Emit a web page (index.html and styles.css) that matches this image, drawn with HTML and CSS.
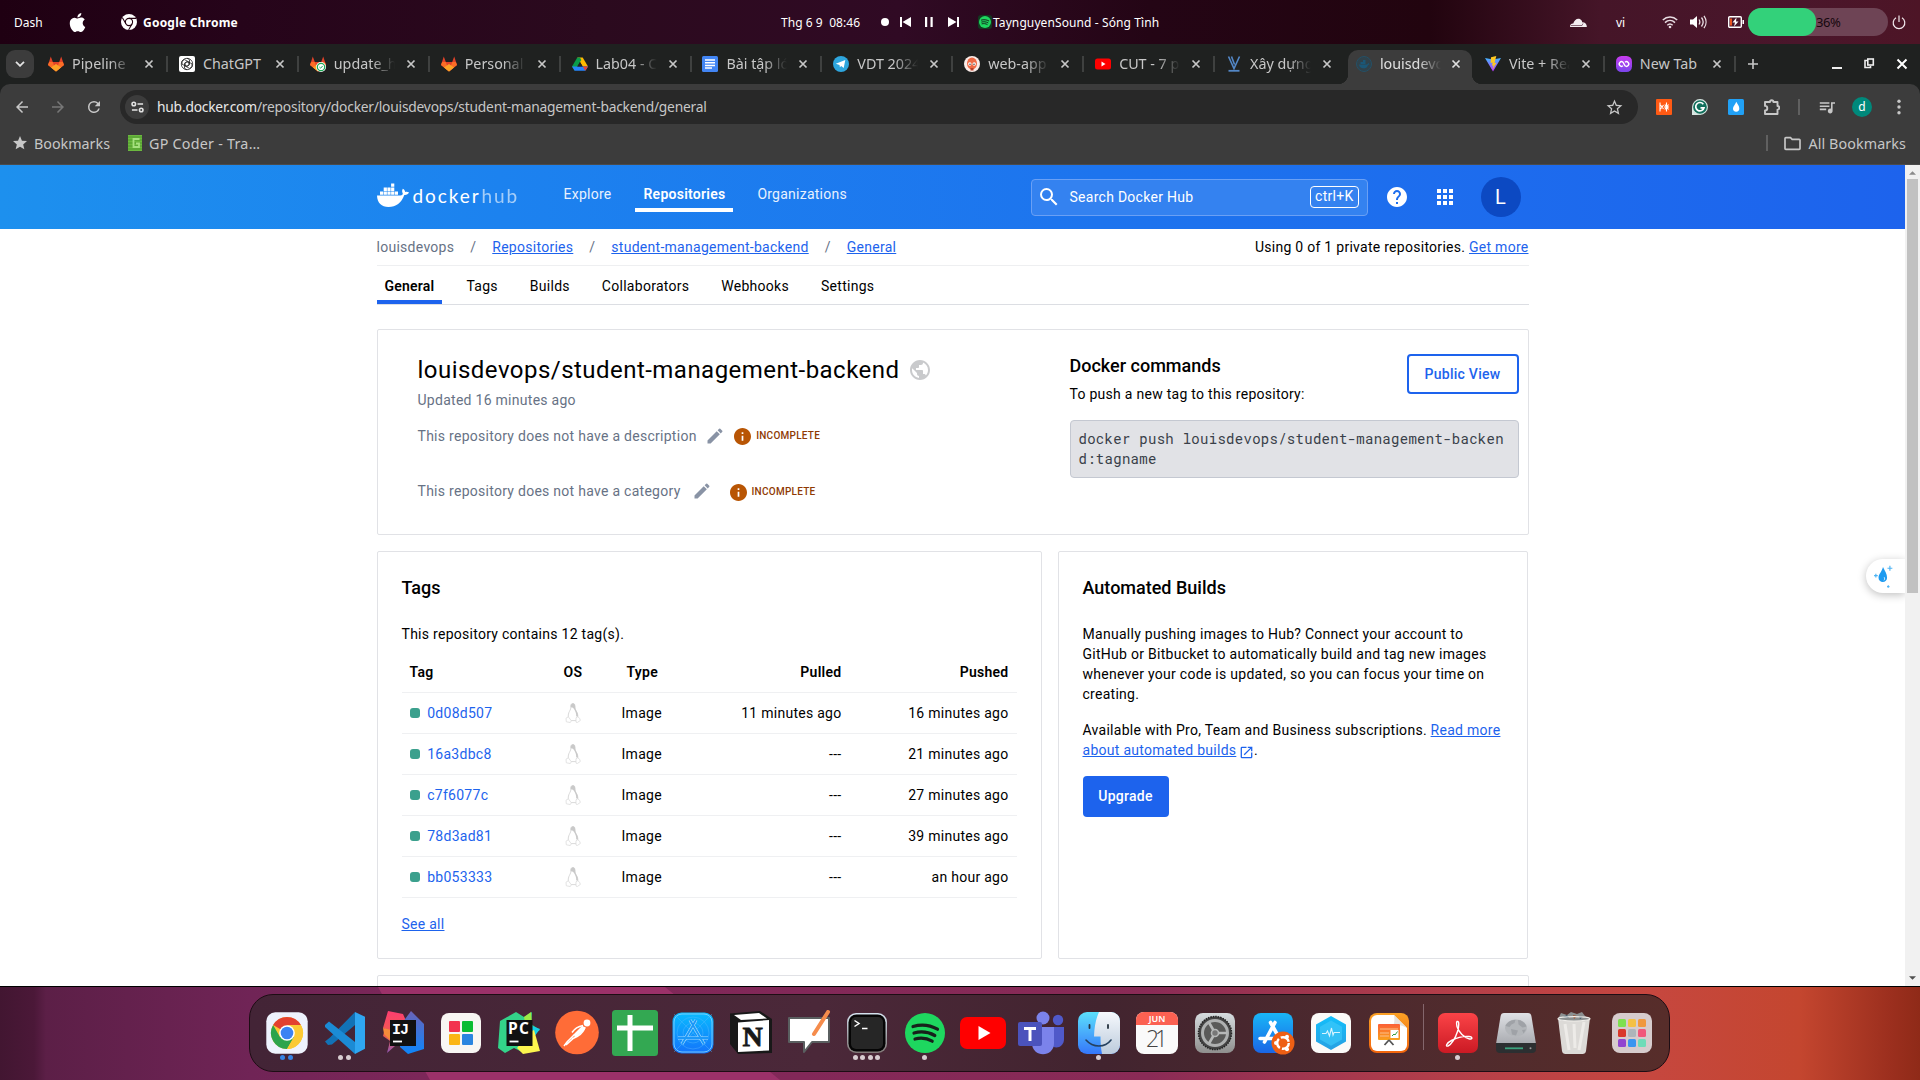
FILE: index.html
```html
<!DOCTYPE html>
<html lang="en">
<head>
<meta charset="utf-8">
<title>louisdevops/student-management-backend general | Docker Hub</title>
<link rel="stylesheet" href="styles.css">
</head>
<body>
<svg class="defs" aria-hidden="true">
  <defs>
    <linearGradient id="gBlue" x1="0" y1="0" x2="0" y2="1"><stop offset="0" stop-color="#19b6f7"/><stop offset="1" stop-color="#1a66e6"/></linearGradient>
    <linearGradient id="gRed" x1="0" y1="0" x2="0" y2="1"><stop offset="0" stop-color="#fb4347"/><stop offset="1" stop-color="#cb1a24"/></linearGradient>
    <linearGradient id="gGrey" x1="0" y1="0" x2="0" y2="1"><stop offset="0" stop-color="#d6dcdf"/><stop offset="1" stop-color="#8f8f8e"/></linearGradient>
    <linearGradient id="gFinder" x1="0" y1="0" x2="0" y2="1"><stop offset="0" stop-color="#5ce0fb"/><stop offset="1" stop-color="#3577fb"/></linearGradient>
    <linearGradient id="gFace" x1="0" y1="0" x2="0" y2="1"><stop offset="0" stop-color="#f6f9fd"/><stop offset="1" stop-color="#bccbdc"/></linearGradient>
    <linearGradient id="gVite" x1="0" y1="0" x2="0" y2="1"><stop offset="0" stop-color="#41b6ff"/><stop offset="1" stop-color="#bd34fe"/></linearGradient>
    <linearGradient id="gPurple" x1="0" y1="0" x2="0" y2="1"><stop offset="0" stop-color="#c93cf0"/><stop offset="1" stop-color="#7a45ec"/></linearGradient>
    <linearGradient id="gOrange" x1="0" y1="0" x2="0" y2="1"><stop offset="0" stop-color="#fba125"/><stop offset="1" stop-color="#f2650c"/></linearGradient>
    <linearGradient id="gSheet" x1="0" y1="0" x2="0" y2="1"><stop offset="0" stop-color="#fb6036"/><stop offset="1" stop-color="#f9a11d"/></linearGradient>
    <linearGradient id="gIjL" x1="0" y1="0" x2="0" y2="1"><stop offset="0" stop-color="#fe3d70"/><stop offset=".6" stop-color="#ee5f4c"/><stop offset="1" stop-color="#8f56b5"/></linearGradient>
    <linearGradient id="gIjR" x1="0" y1="0" x2="0" y2="1"><stop offset="0" stop-color="#6a63b8"/><stop offset="1" stop-color="#0d86fb"/></linearGradient>
    <linearGradient id="gDisk" x1="0" y1="0" x2="0" y2="1"><stop offset="0" stop-color="#dfe1e5"/><stop offset="1" stop-color="#a9abb0"/></linearGradient>
    <linearGradient id="gHex" x1="0" y1="0" x2="0" y2="1"><stop offset="0" stop-color="#13bffb"/><stop offset="1" stop-color="#27a0e2"/></linearGradient>
    <linearGradient id="gStore" x1="0" y1="0" x2="0" y2="1"><stop offset="0" stop-color="#09bcfe"/><stop offset="1" stop-color="#1373fb"/></linearGradient>
    <linearGradient id="gTerm" x1="0" y1="0" x2="0" y2="1"><stop offset="0" stop-color="#d5e2ef"/><stop offset="1" stop-color="#7f7775"/></linearGradient>
  </defs>
  <symbol id="close" viewBox="0 0 10 10"><path d="M1.500 1.500l7 7M8.500 1.500l-7 7" stroke="currentColor" stroke-width="1.700" fill="none"/></symbol>
  <symbol id="gitlab" viewBox="0 0 16 16"><path d="M2.800.5l2 5.500h6.400l2-5.500L16 9l-8 6.500L0 9z" fill="#e24329"/><path d="M0 9l1.100-3h3.700L8 15.500z M16 9l-1.100-3h-3.700L8 15.500z" fill="#fc6d26"/><path d="M3 11.400l5-3.500 5 3.500-5 4.100z" fill="#fca326"/></symbol>
  <symbol id="tux" viewBox="0 0 16 20"><path d="M8 .5C5.900.5 5.700 2.300 5.800 4.500c.1 1.900-1.300 3.300-2 5.300-.5 1.500-.8 3-.5 4.200l1.500 3.600h6l2-3.600c.2-1.700-.3-3.600-1.200-5.200-.8-1.500-1.600-2.500-1.600-4.300 0-2.400-.3-4-2-4z" fill="#fff" stroke="#cfcfcf" stroke-width=".8"/><path d="M5.800 4.200C5.600 1.500 6.300.4 8 .4s2.200 1.400 2.200 3.700c0 1.800.8 3 1.700 4.700.9 1.700 1.300 3.600 1 5.200l-1.700-.8c.2-2.400-.6-4.600-2-7L8 4.800z" fill="#c9c9c9"/><path d="M3.400 13.800L1 15.200l.3 3.600 4 .7 1-1.700zM12.700 13.800l-1.700 1v4.300l1.300.4 3-2-.6-2.200z" fill="#fff" stroke="#dcdcdc" stroke-width=".8"/></symbol>
  <symbol id="edit" viewBox="0 0 24 24"><path d="M3 17.250V21h3.750L17.810 9.940l-3.750-3.750L3 17.250zM20.710 7.040a1 1 0 0 0 0-1.410l-2.340-2.340a1 1 0 0 0-1.410 0l-1.830 1.830 3.750 3.750 1.830-1.830z" fill="#8993a5"/></symbol>
  <symbol id="info" viewBox="2 2 20 20"><path d="M12 2C6.480 2 2 6.480 2 12s4.480 10 10 10 10-4.480 10-10S17.520 2 12 2zm1 15h-2v-6h2v6zm0-8h-2V7h2v2z" fill="#b85504"/></symbol>
  <symbol id="arrow" viewBox="0 0 24 24"><path d="M20 11H7.830l5.590-5.590L12 4l-8 8 8 8 1.410-1.410L7.830 13H20v-2z" fill="currentColor"/></symbol>
  <symbol id="spotify" viewBox="0 0 40 40"><circle cx="20" cy="20" r="20" fill="#1ed75f"/><path d="M8 13.500c8-2.300 17-1.500 24.500 2.700M9 20c7-1.900 14.500-1 20.800 2.500M10 26c6-1.500 12-.8 17.200 2.200" stroke="#17211b" fill="none" stroke-linecap="round" stroke-width="3.200"/></symbol>
</svg>

<header class="topbar">
  <span class="tb-dash">Dash</span>
  <svg class="tb-apple" viewBox="0 0 24 24"><path fill="#fff" d="M12.152 6.896c-.948 0-2.415-1.078-3.960-1.040-2.040.027-3.910 1.183-4.961 3.014-2.117 3.675-.546 9.103 1.519 12.090 1.013 1.454 2.208 3.090 3.792 3.039 1.520-.065 2.090-.987 3.935-.987 1.831 0 2.350.987 3.960.948 1.637-.026 2.676-1.480 3.676-2.948 1.156-1.688 1.636-3.325 1.662-3.415-.039-.013-3.182-1.221-3.220-4.857-.026-3.040 2.480-4.494 2.597-4.559-1.429-2.090-3.623-2.324-4.390-2.376-2-.156-3.675 1.090-4.610 1.090zM15.530 3.830c.843-1.012 1.400-2.427 1.245-3.830-1.207.052-2.662.805-3.532 1.818-.780.896-1.454 2.338-1.273 3.714 1.338.104 2.715-.688 3.559-1.701"/></svg>
  <svg class="tb-chrome" viewBox="0 0 16 16"><circle cx="8" cy="8" r="8" fill="#fff"/><g fill="none" stroke="#22000f" stroke-width="1.100"><circle cx="8" cy="8" r="3.600"/><path d="M8 4.400h7M4.900 9.800L1.400 3.700M11.100 9.800L7.600 15.900"/></g><circle cx="8" cy="8" r="2.100" fill="#fff"/></svg>
  <b class="tb-app">Google Chrome</b>
  <span class="tb-clock">Thg 6 9&nbsp; 08:46</span>
  <span class="tb-dot"></span>
  <svg class="tb-media" viewBox="0 0 60 12"><path fill="#fff" d="M0 1h2v10H0zM11 1v10L2.500 6zM25 1h2.200v10H25zM30.500 1h2.200v10h-2.200zM48 1v10l8.500-5zM57 1h2v10h-2z"/></svg>
  <span class="tb-spot"><svg viewBox="0 0 40 40"><use href="#spotify"/></svg></span>
  <span class="tb-song">TaynguyenSound - Sóng Tình</span>
  <svg class="tb-cloud" viewBox="0 0 17 9"><path d="M0 9c0-2.500 1.500-3.600 3.300-3.400C4 1.500 8.500-1 11.200 2c.7.700 1 1.500 1 2.300C15.400 4.300 17 6.500 16.800 9z" fill="#f3edf0"/><path d="M1 7.500h11l1-2" stroke="#5a3346" stroke-width=".7" fill="none"/></svg>
  <span class="tb-lang">vi</span>
  <svg class="tb-wifi" viewBox="0 0 16 14"><g fill="none" stroke="#e9dde3" stroke-width="1.500"><path d="M.8 5C5 1 11 1 15.200 5M3 7.600c3-2.900 7-2.900 10 0M5.300 10.200c1.700-1.600 3.700-1.600 5.400 0"/></g><circle cx="8" cy="12" r="1.300" fill="#e9dde3"/></svg>
  <svg class="tb-vol" viewBox="0 0 17 14"><path d="M0 4.500h3L7 1v12L3 9.500H0z" fill="#fff"/><path d="M9 4.500c1 1.500 1 3.500 0 5M11.500 2.500c2 2.700 2 6.300 0 9M14 .8c2.700 3.700 2.700 8.700 0 12.400" fill="none" stroke="#eadfe4" stroke-width="1.300"/></svg>
  <svg class="tb-batt" viewBox="0 0 16 12"><rect x=".7" y=".7" width="12.600" height="10.600" rx="1" fill="none" stroke="#fff" stroke-width="1.400"/><path d="M2 2.500h2v7H2z" fill="#e95420"/><path d="M8.500 1.500L4.500 6.500H7L6 10.500l4.500-5H8z" fill="#fff"/><path d="M14.500 4h1.500v4h-1.500z" fill="#fff"/></svg>
  <span class="tb-pill"><i></i><em>36%</em></span>
  <svg class="tb-power" viewBox="0 0 14 14"><path d="M4 2.300a5.800 5.800 0 1 0 6 0M7 0v6.500" fill="none" stroke="#f2e9ed" stroke-width="1.200"/></svg>
</header>

<div class="browser">
<div class="tabstrip">
  <span class="tabsearch"><svg viewBox="0 0 10 6"><path d="M1 .8l4 4 4-4" fill="none" stroke="#e3e3e3" stroke-width="1.800"/></svg></span>
  <div class="tabs">
    <div class="tab"><svg class="fav" viewBox="0 0 16 16"><use href="#gitlab"/></svg><span>Pipeline</span><svg class="x"><use href="#close"/></svg></div>
    <div class="tab"><svg class="fav" viewBox="0 0 16 16"><rect width="16" height="16" rx="2" fill="#fff"/><g fill="none" stroke="#222" stroke-width=".8"><path d="M8 2.200l2.500 1.500v5L8 10.200 5.500 8.700M8 13.800l-2.500-1.500v-5L8 5.800l2.500 1.500M3 5.100l2.500-1.500 4.400 2.500v3M13 10.900l-2.500 1.500L6.100 9.900v-3M3 5.100v3l4.400 2.500 2.600-1.500M13 10.900v-3L8.600 5.400 6.100 6.900"/></g><circle cx="8" cy="8" r="5.700" fill="none" stroke="#222" stroke-width=".8"/></svg><span>ChatGPT</span><svg class="x"><use href="#close"/></svg></div>
    <div class="tab"><svg class="fav" viewBox="0 0 16 16"><use href="#gitlab"/><circle cx="11" cy="11" r="5" fill="#fff"/><circle cx="11" cy="11" r="3.700" fill="#fff" stroke="#1aaa55" stroke-width="1.200"/><path d="M9.400 11l1.200 1.200 2-2.200" stroke="#1aaa55" fill="none"/></svg><span>update_h</span><svg class="x"><use href="#close"/></svg></div>
    <div class="tab"><svg class="fav" viewBox="0 0 16 16"><use href="#gitlab"/></svg><span>Personal</span><svg class="x"><use href="#close"/></svg></div>
    <div class="tab"><svg class="fav" viewBox="0 0 16 16"><path d="M5.300 1.500h5.400L16 10.500h-5.300z" fill="#ffba00"/><path d="M0 10.500L5.300 1.500h2.700L9.300 4 2.700 14.800z" fill="#0a9c4b"/><path d="M0 10.500h16l-2.700 4.300H2.700z" fill="#2684fc"/><path d="M10.700 10.500H16l-2.700 4.300z" fill="#ea4335"/><path d="M8 6l2.700 4.500H5.300z" fill="#202220"/></svg><span>Lab04 - C</span><svg class="x"><use href="#close"/></svg></div>
    <div class="tab"><svg class="fav" viewBox="0 0 16 16"><rect width="16" height="16" rx="1.500" fill="#4285f4"/><path d="M3 4h10M3 6.700h10M3 9.400h10M3 12.100h7" stroke="#fff" stroke-width="1.500"/></svg><span>Bài tập lớ</span><svg class="x"><use href="#close"/></svg></div>
    <div class="tab"><svg class="fav" viewBox="0 0 16 16"><circle cx="8" cy="8" r="8" fill="#2ea6de"/><path d="M2.800 7.800l9.500-3.900-1.600 8-2.500-1.800-1.300 1.200-.4-2.300z" fill="#fff"/></svg><span>VDT 2024</span><svg class="x"><use href="#close"/></svg></div>
    <div class="tab"><svg class="fav" viewBox="0 0 16 16"><circle cx="8" cy="8" r="8" fill="#fbece8"/><ellipse cx="8" cy="7.500" rx="5" ry="6" fill="#ef6a45"/><circle cx="5.800" cy="8" r="1.700" fill="#fff"/><circle cx="10.200" cy="8" r="1.700" fill="#fff"/><circle cx="6" cy="8.200" r=".7" fill="#222"/><circle cx="10" cy="8.200" r=".7" fill="#222"/><path d="M6.500 12h3v2.500h-3z" fill="#b5402a"/></svg><span>web-app</span><svg class="x"><use href="#close"/></svg></div>
    <div class="tab"><svg class="fav" viewBox="0 0 16 16"><rect y="2.500" width="16" height="11" rx="2.500" fill="#f00"/><path d="M6.500 5.600v4.800L10.500 8z" fill="#fff"/></svg><span>CUT - 7 p</span><svg class="x"><use href="#close"/></svg></div>
    <div class="tab"><svg class="fav" viewBox="0 0 16 16"><path d="M2.500.5l5.500 12 5.500-12M5.500.5l3 8" stroke="#5387c6" stroke-width="1.600" fill="none"/><path d="M2.500 14.800h11" stroke="#5387c6" stroke-width="1.800"/></svg><span>Xây dựng</span><svg class="x"><use href="#close"/></svg></div>
    <div class="tab active"><svg class="fav" viewBox="0 0 16 16"><circle cx="8" cy="8" r="7.500" fill="#30424b" stroke="#255066"/><path d="M3 8.500h8l1.500-1.500 1 1.200-1.500.8c-1 3-3 3.500-5 3.300C5 12.200 3.300 11 3 8.500zM4.500 6h5v2h-5zM7 4h2.500v2H7z" fill="#1b5777"/></svg><span>louisdevops</span><svg class="x"><use href="#close"/></svg></div>
    <div class="tab"><svg class="fav" viewBox="0 0 16 16"><path d="M0 2l8 13.500L16 2 8 3.500z" fill="url(#gVite)"/><path d="M11.300 0L6 1.200 5.600 7l2-.4-.6 3.200 1.500-.5-1 4.200 4-6.800-2 .4z" fill="#ffc822"/></svg><span>Vite + Rea</span><svg class="x"><use href="#close"/></svg></div>
    <div class="tab"><svg class="fav" viewBox="0 0 16 16"><rect width="16" height="16" rx="5.500" fill="url(#gPurple)"/><path d="M7 9.800a2.300 2.300 0 1 1 0-3.600l2 3.600a2.300 2.300 0 1 0 0-3.600" stroke="#fff" stroke-width="1.400" fill="none"/></svg><span>New Tab</span><svg class="x"><use href="#close"/></svg></div>
  </div>
  <svg class="plus" viewBox="0 0 10 10"><path d="M5 0v10M0 5h10" stroke="#c7c7c7" stroke-width="1.600"/></svg>
  <svg class="winbtns" viewBox="0 0 76 12"><path d="M0 10h10" stroke="#eee" stroke-width="2"/><path d="M36 2.500h-3V9.500h5.500V8" stroke="#eee" stroke-width="1.600" fill="none"/><rect x="35.800" y="1" width="5.500" height="6" fill="none" stroke="#eee" stroke-width="1.600"/><path d="M65.500 1.500l9 9M74.500 1.500l-9 9" stroke="#fff" stroke-width="2"/></svg>
</div>

<div class="chrome">
<div class="toolbar">
  <svg class="nav" viewBox="0 0 24 24"><use href="#arrow"/></svg>
  <svg class="nav off" viewBox="0 0 24 24"><use href="#arrow" transform="rotate(180 12 12)"/></svg>
  <svg class="nav" viewBox="0 0 24 24"><path fill="currentColor" d="M17.650 6.350A7.958 7.958 0 0 0 12 4a8 8 0 1 0 7.730 10h-2.080A6 6 0 1 1 12 6c1.660 0 3.140.690 4.220 1.780L13 11h7V4l-2.350 2.350z"/></svg>
  <div class="omnibox">
    <span class="site"><svg viewBox="0 0 14 12"><g fill="none" stroke="#e3e3e3" stroke-width="1.700"><circle cx="3" cy="2.800" r="1.900"/><path d="M7 2.800h6M1 9.200h6"/><circle cx="11" cy="9.200" r="1.900"/></g></svg></span>
    <span class="url"><b>hub.docker.com</b>/repository/docker/louisdevops/student-management-backend/general</span>
    <svg class="fave" viewBox="0 0 24 24"><path fill="#c7c7c7" d="M22 9.240l-7.190-.620L12 2 9.190 8.630 2 9.240l5.460 4.730L5.820 21 12 17.270 18.180 21l-1.630-7.030L22 9.240zM12 15.400l-3.760 2.270 1-4.280-3.320-2.880 4.380-.380L12 6.100l1.710 4.040 4.380.380-3.320 2.880 1 4.280L12 15.400z"/></svg>
  </div>
  <div class="exts">
    <svg viewBox="0 0 16 16"><rect width="16" height="16" rx="1" fill="#ff5a14"/><path d="M4 3.500v9M4.500 6l3 4M4.500 10l3-4M10.500 3.500v9M8 8h5M8.800 5.500l3.700 5M12.500 5.500l-3.700 5" stroke="#fff" stroke-width="1.100"/></svg>
    <svg viewBox="0 0 16 16"><path d="M0 8v8h8z" fill="#d9e6e2"/><circle cx="8" cy="8" r="7.400" fill="#11705c" stroke="#d9e6e2" stroke-width="1.100"/><path d="M11.300 5.200A4.200 4.200 0 1 0 12 8.800H8.500" fill="none" stroke="#fff" stroke-width="1.700"/></svg>
    <svg viewBox="0 0 16 16"><rect width="16" height="16" rx="1.500" fill="#21a1f6"/><path d="M8.300 2.800c1.500 2.800 3 4.500 3 6.700a3.100 3.100 0 0 1-6.300 0c0-2 2.200-3.500 3.300-6.700z" fill="#fff"/></svg>
    <svg viewBox="0 0 16 16"><path d="M1 3h5a1.700 1.700 0 0 1 3.400 0H13.500v4a1.800 1.800 0 0 1 0 3.600V15H1v-3.500a2.300 2.300 0 0 0 0-4.600z" fill="none" stroke="#c7c7c7" stroke-width="1.900" stroke-linejoin="round"/></svg>
    <i class="vsep"></i>
    <svg class="queue" viewBox="2 3 20 18"><path fill="#c7c7c7" d="M15 6H3v2h12V6zm0 4H3v2h12v-2zM3 16h8v-2H3v2zM17 6v8.180c-.310-.110-.650-.180-1-.180-1.660 0-3 1.340-3 3s1.340 3 3 3 3-1.340 3-3V8h3V6h-5z"/></svg>
    <span class="me">d</span>
    <svg class="kebab" viewBox="0 0 4 16"><g fill="#c7c7c7"><circle cx="2" cy="2.200" r="1.700"/><circle cx="2" cy="8" r="1.700"/><circle cx="2" cy="13.800" r="1.700"/></g></svg>
  </div>
</div>
<div class="bookmarks">
  <svg class="bstar" viewBox="2 2 20 20"><path fill="#c7c7c7" d="M12 17.270L18.180 21l-1.640-7.030L22 9.240l-7.190-.610L12 2 9.190 8.630 2 9.240l5.460 4.730L5.820 21z"/></svg>
  <span class="bm1">Bookmarks</span>
  <svg class="gp" viewBox="0 0 14 16"><rect width="14" height="16" fill="#6cb83f"/><path d="M0 2h14M0 5h14M0 8h14M0 11h14M0 14h14" stroke="#4c9a2e" stroke-width="1"/><path d="M11.500 4h-6v8h5.500V8.500H8" fill="none" stroke="#a5e07f" stroke-width="1.800"/></svg>
  <span class="bm2">GP Coder - Tra…</span>
  <i class="vsep"></i>
  <svg class="folder" viewBox="2 3 20 18"><path fill="#c7c7c7" d="M20 6h-8l-2-2H4a2 2 0 0 0-2 2v12c0 1.100.900 2 2 2h16c1.100 0 2-.900 2-2V8c0-1.100-.900-2-2-2zm0 12H4V6h5.170l2 2H20v10z"/></svg>
  <span class="bm3">All Bookmarks</span>
</div>
</div>

<div class="viewport">
<main class="page">
  <nav class="hubbar">
    <div class="wrap hubrow">
      <svg class="whale" viewBox="0 0 32 24"><g fill="#fff"><path d="M0 12.500h23.500c1.300 0 2.200-.8 2.300-2-.9-1.500-.9-3.400 0-4.800 1.300.7 2.200 1.900 2.300 3.200 1.300-.4 2.700-.3 3.900.4-.8 1.900-2.500 2.900-4.700 2.700C24.500 20 19 24 11.500 24 4.500 24 .3 20 0 12.500z"/><path d="M3 8.500h3.200v3.200H3zM6.700 8.500h3.200v3.200H6.700zM10.400 8.500h3.200v3.200h-3.200zM14.100 8.500h3.200v3.200h-3.200zM17.800 8.500H21v3.200h-3.200zM6.700 4.600h3.200v3.300H6.700zM10.400 4.600h3.200v3.300h-3.200zM14.100 4.600h3.200v3.300h-3.200zM14.100.5h3.200v3.300h-3.200z"/></g></svg>
      <span class="brand">docker<i>hub</i></span>
      <div class="hubnav"><a>Explore</a><a class="on">Repositories</a><a>Organizations</a></div>
      <div class="search">
        <svg viewBox="3 3 18 18"><path fill="#fff" d="M15.500 14h-.790l-.280-.270A6.470 6.470 0 0 0 16 9.500 6.500 6.500 0 1 0 9.500 16c1.610 0 3.090-.590 4.230-1.570l.270.280v.790l5 4.990L20.490 19l-4.990-5zm-6 0C7.010 14 5 11.990 5 9.500S7.010 5 9.500 5 14 7.010 14 9.500 11.990 14 9.500 14z"/></svg>
        <span>Search Docker Hub</span><kbd>ctrl+K</kbd>
      </div>
      <svg class="help" viewBox="2 2 20 20"><path fill="#fff" d="M12 2C6.480 2 2 6.480 2 12s4.480 10 10 10 10-4.480 10-10S17.520 2 12 2zm1 17h-2v-2h2v2zm2.070-7.750l-.900.920C13.450 12.900 13 13.500 13 15h-2v-.500c0-1.100.450-2.100 1.170-2.830l1.240-1.260c.370-.360.590-.860.590-1.410 0-1.100-.900-2-2-2s-2 .900-2 2H8c0-2.210 1.790-4 4-4s4 1.790 4 4c0 .880-.360 1.680-.930 2.250z"/></svg>
      <svg class="grid9" viewBox="4 4 16 16"><path fill="#fff" d="M4 8h4V4H4v4zm6 12h4v-4h-4v4zm-6 0h4v-4H4v4zm0-6h4v-4H4v4zm6 0h4v-4h-4v4zm6-10v4h4V4h-4zm-6 4h4V4h-4v4zm6 6h4v-4h-4v4zm0 6h4v-4h-4v4z"/></svg>
      <span class="avatar">L</span>
    </div>
  </nav>

  <div class="wrap">
    <div class="crumbs">
      <span class="muted">louisdevops</span><i>/</i><a>Repositories</a><i>/</i><a>student-management-backend</a><i>/</i><a>General</a>
      <span class="quota">Using 0 of 1 private repositories. <a>Get more</a></span>
    </div>
    <div class="subtabs"><a class="on">General</a><a>Tags</a><a>Builds</a><a>Collaborators</a><a>Webhooks</a><a>Settings</a></div>

    <section class="card repo">
      <div class="about">
        <div class="title"><h1>louisdevops/student-management-backend</h1><svg viewBox="2 2 20 20"><path fill="#c9cacc" d="M12 2C6.480 2 2 6.480 2 12s4.480 10 10 10 10-4.480 10-10S17.520 2 12 2zm-1 17.930c-3.950-.490-7-3.850-7-7.930 0-.620.080-1.210.210-1.790L9 15v1c0 1.100.900 2 2 2v1.930zm6.900-2.540c-.260-.810-1-1.390-1.900-1.390h-1v-3c0-.550-.450-1-1-1H8v-2h2c.550 0 1-.450 1-1V7h2c1.100 0 2-.900 2-2v-.410c2.930 1.190 5 4.060 5 7.410 0 2.080-.800 3.970-2.100 5.390z"/></svg></div>
        <p class="updated">Updated 16 minutes ago</p>
        <div class="missing"><span>This repository does not have a description</span><svg class="pen"><use href="#edit"/></svg><svg class="inf"><use href="#info"/></svg><b>INCOMPLETE</b></div>
        <div class="missing second"><span>This repository does not have a category</span><svg class="pen"><use href="#edit"/></svg><svg class="inf"><use href="#info"/></svg><b>INCOMPLETE</b></div>
      </div>
      <div class="commands">
        <div class="cmdhead"><div><h2>Docker commands</h2><p>To push a new tag to this repository:</p></div><button class="outline">Public View</button></div>
        <pre>docker push louisdevops/student-management-backend:tagname</pre>
      </div>
    </section>

    <div class="columns">
      <section class="card tags">
        <h2>Tags</h2>
        <p>This repository contains 12 tag(s).</p>
        <table>
          <thead><tr><th class="c1">Tag</th><th class="c2">OS</th><th class="c3">Type</th><th class="c4">Pulled</th><th class="c5">Pushed</th></tr></thead>
          <tbody>
            <tr><td><i class="ok"></i><a>0d08d507</a></td><td class="c2"><svg class="tux"><use href="#tux"/></svg></td><td>Image</td><td class="c4">11 minutes ago</td><td class="c5">16 minutes ago</td></tr>
            <tr><td><i class="ok"></i><a>16a3dbc8</a></td><td class="c2"><svg class="tux"><use href="#tux"/></svg></td><td>Image</td><td class="c4">---</td><td class="c5">21 minutes ago</td></tr>
            <tr><td><i class="ok"></i><a>c7f6077c</a></td><td class="c2"><svg class="tux"><use href="#tux"/></svg></td><td>Image</td><td class="c4">---</td><td class="c5">27 minutes ago</td></tr>
            <tr><td><i class="ok"></i><a>78d3ad81</a></td><td class="c2"><svg class="tux"><use href="#tux"/></svg></td><td>Image</td><td class="c4">---</td><td class="c5">39 minutes ago</td></tr>
            <tr><td><i class="ok"></i><a>bb053333</a></td><td class="c2"><svg class="tux"><use href="#tux"/></svg></td><td>Image</td><td class="c4">---</td><td class="c5">an hour ago</td></tr>
          </tbody>
        </table>
        <a class="all">See all</a>
      </section>
      <section class="card builds">
        <h2>Automated Builds</h2>
        <p>Manually pushing images to Hub? Connect your account to GitHub or Bitbucket to automatically build and tag new images whenever your code is updated, so you can focus your time on creating.</p>
        <p>Available with Pro, Team and Business subscriptions. <a>Read more about automated builds</a> <svg class="ext" viewBox="2 2 20 20"><path fill="#1d63ed" d="M19 19H5V5h7V3H5a2 2 0 0 0-2 2v14a2 2 0 0 0 2 2h14c1.100 0 2-.900 2-2v-7h-2v7zM14 3v2h3.590l-9.830 9.830 1.410 1.410L19 6.410V10h2V3h-7z"/></svg>.</p>
        <button class="primary">Upgrade</button>
      </section>
    </div>
    <section class="card next"></section>
  </div>
</main>
<aside class="drop"><svg viewBox="0 0 24 32"><path d="M12 5c2.500 5.500 5 8.500 5 13a5.200 5.200 0 0 1-10.500 0c0-4.200 3.900-6.800 5.500-13z" fill="#1d9bf0"/><path d="M13.500 17.500c.8 1.500.5 3-.3 3.800" stroke="#fff" fill="none"/><path d="M1 15.500h4.500M3.200 13.200v4.600M17.500 6.500h6M20.500 3.500v6M17 29h3M18.500 27.500v3" stroke="#4db3f3" stroke-width="1.400"/></svg></aside>
<div class="scrollbar"><svg viewBox="0 0 8 4"><path d="M0 4l4-4 4 4z" fill="#8b8b8b"/></svg><i></i><svg viewBox="0 0 8 4"><path d="M0 0l4 4 4-4z" fill="#505050"/></svg></div>
</div>
</div>

<footer class="desk">
<div class="dock">
  <div class="app"><svg viewBox="0 0 46 46"><rect x="2.300" y="2.300" width="41.400" height="41.400" rx="9" fill="#eef2fd"/><circle cx="23" cy="23" r="16" fill="#fbc934"/><path d="M23 23L9.100 15A16 16 0 0 1 36.900 15z" fill="#e3402f"/><path d="M9.100 15A16 16 0 0 0 23 39l7-12-7-4-7 4z" fill="#2da44c"/><path d="M23 15h13.900A16 16 0 0 1 23 39l7-12z" fill="#fbc934"/><circle cx="23" cy="23" r="7.800" fill="#fff"/><circle cx="23" cy="23" r="6.300" fill="#3b82f3"/></svg><span class="run blue"><i></i><i></i></span></div>
  <div class="app"><svg viewBox="0 0 46 46"><path d="M33 2L8 27.500 3 31.500l3 3.500 4-.5L33 15z" fill="#1272b6"/><path d="M3 15l4-3.500L33 32v12L3 17z" fill="#1b8bd5"/><path d="M33 2l10 4.800v32L33 44z" fill="#2fa6f1"/></svg><span class="run"><i></i><i></i></span></div>
  <div class="app"><svg viewBox="0 0 46 46"><path d="M8 1l15 3 8 18L7 43l3-12-7-5 2-7-2-1z" fill="url(#gIjL)"/><path d="M3 18l8 2-1 10-6-6z" fill="#f58b3a"/><path d="M31 1l13 13v25l-16 5-8-7V16z" fill="url(#gIjR)"/><rect x="10" y="10" width="26" height="26" fill="#111"/><text x="12" y="24" font-family="Liberation Mono" font-weight="bold" font-size="15" fill="#fff" textLength="17">IJ</text><path d="M13 31.500h9" stroke="#fff" stroke-width="1.800"/></svg></div>
  <div class="app"><svg viewBox="0 0 46 46"><rect x="3" y="3" width="40" height="40" rx="8" fill="#f8f6f3"/><rect x="11" y="11" width="11" height="11" rx="1" fill="#f2334f"/><rect x="24" y="11" width="11" height="11" rx="1" fill="#0bbd33"/><rect x="11" y="24" width="11" height="11" rx="1" fill="#fbb514"/><rect x="24" y="24" width="11" height="11" rx="1" fill="#2a85e0"/></svg></div>
  <div class="app"><svg viewBox="0 0 46 46"><path d="M4 11L20 2l8 5 8-5-1 12 9 6-6 3 5 17-15 3-10-5-9 5-7-5z" fill="#33d38a"/><path d="M28 7l7-5 1 12-6 4z" fill="#9cea45"/><path d="M31 14l13 5-6 8z" fill="#15cfe6"/><path d="M34 22l4-2 6 21-17 3-6-6z" fill="#fcf54e"/><rect x="10.500" y="10" width="26" height="26" fill="#111"/><text x="12" y="24" font-family="Open Sans" font-weight="bold" font-size="15.500" fill="#fff" textLength="21">PC</text><path d="M13.500 31.500h9" stroke="#fff" stroke-width="1.800"/></svg></div>
  <div class="app"><svg viewBox="0 0 46 46"><circle cx="23" cy="22.500" r="21.800" fill="#ff6c37"/><circle cx="33" cy="13" r="3.400" fill="#fff"/><path d="M28.500 15.500l3 3-9 8.500-3.500-2z" fill="#fff"/><path d="M29 15.500c-5 1-9 4-11 7M31 17c-1 4-4 7-7 9l-6 3M20 25l-7 7-3 4M22 26l-10 9" fill="none" stroke="#fff" stroke-width="1.500"/></svg></div>
  <div class="app"><svg viewBox="0 0 46 46"><rect width="46" height="46" rx="3.500" fill="#33a852"/><path d="M5 18h36M18 5v36" stroke="#fff" stroke-width="5"/></svg></div>
  <div class="app"><svg viewBox="0 0 46 46"><rect x="2.500" y="2.500" width="41" height="41" rx="9" fill="url(#gStore)"/><rect x="4" y="4" width="38" height="38" rx="8" fill="none" stroke="#7fd0fd" stroke-width=".9"/><g fill="none" stroke="#5cbcfc" stroke-width=".4"><circle cx="23" cy="23" r="16"/><circle cx="23" cy="23" r="10"/><path d="M4 4l38 38M42 4L4 42"/></g><path d="M20 10l14 24M26 10L12 34M8 28h30" stroke="#a7dbfd" stroke-width="3.200"/><path d="M20 10l14 24M26 10L12 34M8 28h30" stroke="#1c98f8" stroke-width="1.900"/></svg></div>
  <div class="app"><svg viewBox="0 0 46 46"><path d="M2 3.500L32 1l12 8v34L10 44 2 34z" fill="#181818"/><path d="M6 5l25-2 8 5.500L13 10z" fill="#fff"/><path d="M10 12.500l31-2.500v30.500L10 42z" fill="#fff"/><text x="14.500" y="36" font-family="Liberation Serif" font-weight="bold" font-size="28" fill="#181818" stroke="#181818" stroke-width=".8">N</text></svg></div>
  <div class="app"><svg viewBox="0 0 46 46"><path d="M3 8h40v24H26L18 42V32H3z" fill="#fff" stroke="#5a5f60" stroke-width="2" stroke-linejoin="round"/><path d="M42 2L28 24" stroke="#f58c4c" stroke-width="4" stroke-linecap="round"/></svg></div>
  <div class="app"><svg viewBox="0 0 46 46"><rect x="3" y="3" width="40" height="40" rx="9" fill="url(#gTerm)"/><rect x="4.500" y="4.500" width="37" height="37" rx="8" fill="#050505"/><rect x="7" y="7" width="32" height="32" rx="5" fill="#262626"/><path d="M10.500 10.500l4.500 3-4.500 3M18 18.500h5.500" fill="none" stroke="#fff" stroke-width="1.500"/></svg><span class="run"><i></i><i></i><i></i><i></i></span></div>
  <div class="app"><svg viewBox="-3 -3 46 46"><use href="#spotify" width="40" height="40"/></svg><span class="run"><i></i></span></div>
  <div class="app"><svg viewBox="0 0 46 46"><rect y="7" width="46" height="32" rx="7" fill="#f00"/><path d="M18.500 16v14l12-7z" fill="#fff"/></svg></div>
  <div class="app"><svg viewBox="0 0 46 46"><circle cx="25" cy="8" r="6.500" fill="#7b83eb"/><circle cx="40" cy="10" r="5.200" fill="#5059c9"/><path d="M28 17h18v12c0 9-10 11-14 5z" fill="#5059c9"/><path d="M14 17h22v16c0 15-22 15-22 0z" fill="#7b83eb"/><rect y="12" width="24" height="24" rx="2" fill="#4b53bc"/><path d="M6 18.500h12M12 18.500v12.500" stroke="#fff" stroke-width="3"/></svg></div>
  <div class="app"><svg viewBox="0 0 46 46"><rect x="2" y="2" width="42" height="42" rx="9" fill="url(#gFinder)"/><path d="M23 2h12a9 9 0 0 1 9 9v24a9 9 0 0 1-9 9h-9c-1-5-1.500-10-1.500-17.500h-6.500c.3-10 2-18 5-24.500z" fill="url(#gFace)"/><path d="M13.500 15v3M32 15v3" stroke="#25323f" stroke-width="1.800" stroke-linecap="round"/><path d="M10 30c7 8 19 8 25 0" fill="none" stroke="#25415f" stroke-width="1.600" stroke-linecap="round"/></svg><span class="run"><i></i></span></div>
  <div class="app"><svg viewBox="0 0 46 46"><rect x="2" y="2" width="42" height="42" rx="8" fill="#fafafa"/><path d="M2 15v-5a8 8 0 0 1 8-8h26a8 8 0 0 1 8 8v5z" fill="#fb6152"/><text x="23" y="12" text-anchor="middle" font-family="Noto Sans" font-weight="600" font-size="9" fill="#fff">JUN</text><text x="23" y="37" text-anchor="middle" font-family="Open Sans" font-weight="300" font-size="23" fill="#444" textLength="22">21</text></svg></div>
  <div class="app"><svg viewBox="0 0 46 46"><rect x="3" y="3" width="40" height="40" rx="8" fill="url(#gGrey)"/><circle cx="23" cy="23" r="16.500" fill="#444" stroke="#222" stroke-width="1.500" stroke-dasharray="1.500 1"/><circle cx="23" cy="23" r="12.500" fill="#5a5a59" stroke="#aeb0b0" stroke-width="3"/><path d="M23 23h12M23 23l-6-10.500M23 23l-6 10.500" stroke="#b6b8b8" stroke-width="2.600"/><circle cx="23" cy="23" r="3.500" fill="#777" stroke="#b6b8b8" stroke-width="1.600"/></svg></div>
  <div class="app"><svg viewBox="0 0 46 46"><rect x="3" y="3" width="40" height="40" rx="8" fill="url(#gBlue)"/><path d="M20.500 12.500l9 16M25 12.500L14.500 32M10 28.500h20" stroke="#fff" stroke-width="3.600" stroke-linecap="round"/><circle cx="33" cy="33" r="11.500" fill="#ee5f14"/><circle cx="33" cy="33" r="5.800" fill="none" stroke="#fff" stroke-width="2.400" stroke-dasharray="10 2.150"/><circle cx="26" cy="33" r="2" fill="#fff"/><circle cx="37" cy="26.800" r="2" fill="#fff"/><circle cx="37" cy="39.200" r="2" fill="#fff"/></svg></div>
  <div class="app"><svg viewBox="0 0 46 46"><rect x="3" y="3" width="40" height="40" rx="8" fill="#fbfaf8"/><path d="M23 6l15 8.500v17L23 40 8 31.500v-17z" fill="url(#gHex)"/><path d="M23 10.500l11 6.300v12.600l-11 6.300-11-6.300V16.800z" fill="#3cc7fa" opacity=".7"/><path d="M14 23.500h4l1.500-2.500 2 5 2-8 1.500 7 1-2.500h6" fill="none" stroke="#d8f4ff" stroke-width="1.100"/></svg></div>
  <div class="app"><svg viewBox="0 0 46 46"><rect x="3" y="3" width="40" height="40" rx="8" fill="url(#gOrange)"/><path d="M11 5h17l13 13v17a6 6 0 0 1-6 6H11a6 6 0 0 1-6-6V11a6 6 0 0 1 6-6z" fill="#fff"/><path d="M28 5c1 6 0 9-1 11 4-2 9-1 14 2z" fill="#e5e2de"/><rect x="12" y="14" width="22" height="16" rx="1" fill="url(#gSheet)"/><path d="M14 19h18M14 23h9M14 26h9" stroke="#fcbf8a"/><rect x="24.500" y="20" width="8" height="8" fill="#fff"/><path d="M26 26l2-2 1 1 2.500-3.500" stroke="#3a9b3a" fill="none"/><path d="M23 30l-4.500 5M23 30l4.500 5" stroke="#555" stroke-width="1.800"/></svg></div>
  <i class="dsep"></i>
  <div class="app"><svg viewBox="0 0 46 46"><rect x="3" y="3" width="40" height="40" rx="7" fill="url(#gRed)"/><path d="M22 11.500c2.500-1 2 5 .5 10-2 6.500-6 13-9.500 14.500-3 1-1.500-3 3.500-5.500 6-3 13-4.500 17.500-4 4 .5 3.500 3 .5 2.500-5-.8-11-7-12.500-12.500-.5-2.500-.5-4.500 0-5z" fill="none" stroke="#fff" stroke-width="1.400"/></svg><span class="run"><i></i></span></div>
  <div class="app"><svg viewBox="0 0 46 46"><path d="M11 3h24c2 0 3 1 3.400 3L43 34H3L7.600 6c.4-2 1.400-3 3.400-3z" fill="url(#gDisk)"/><path d="M3 33h40v6a4 4 0 0 1-4 4H7a4 4 0 0 1-4-4z" fill="#2c2f31"/><path d="M12 38.300h18" stroke="#3ba37e" stroke-width="1.800"/><circle cx="37.500" cy="38.300" r="1" fill="#999"/><ellipse cx="23" cy="18" rx="11" ry="8.500" fill="#b3b6ba"/><path d="M12.500 16c1-3 5-6 10-6.200l-1 3.200-3 1.500-2 2.500zM25 10c4 .5 7.500 3 8.500 6.500l-4 1-4-3zM18 19l7 1.500-2 5-4-1zM29 20l4-.5-2.500 4z" fill="#9fa2a7"/></svg></div>
  <div class="app"><svg viewBox="0 0 46 46"><path d="M7 8h32l-4 33c-.3 2-1.500 3-3.500 3h-17c-2 0-3.200-1-3.500-3z" fill="#dcdad7"/><path d="M14 14l4 26M23 14l1 24M33 12l-5 28" stroke="#edebe8" stroke-width="3"/><path d="M7 9l3-6 6 2 4-3 6 2 5-2 3 4 5 3-5 2H12z" fill="#8b8f90"/><path d="M12 7l4-2 2 3zM28 6l4 1-3 2z" fill="#2f4e63"/><path d="M22 5l4 1-3 3z" fill="#a1512e"/><ellipse cx="23" cy="8.800" rx="16" ry="2.200" fill="none" stroke="#efedea" stroke-width="1.100"/></svg></div>
  <div class="app"><svg viewBox="0 0 46 46"><rect x="3" y="3" width="40" height="40" rx="8" fill="#d7cccd"/><rect x="9" y="9" width="8" height="8" rx="1.500" fill="#7fe04f"/><rect x="19" y="9" width="8" height="8" rx="1.500" fill="#f4c045"/><rect x="29" y="9" width="8" height="8" rx="1.500" fill="#f0983f"/><rect x="9" y="19" width="8" height="8" rx="1.500" fill="#d9382b"/><rect x="19" y="19" width="8" height="8" rx="1.500" fill="#aeb5ba"/><rect x="29" y="19" width="8" height="8" rx="1.500" fill="#f1587a"/><rect x="9" y="29" width="8" height="8" rx="1.500" fill="#9146d0"/><rect x="19" y="29" width="8" height="8" rx="1.500" fill="#3b95f0"/><rect x="29" y="29" width="8" height="8" rx="1.500" fill="#6fdcb8"/></svg></div>
</div>
</footer>
</body>
</html>
```

FILE: styles.css
```css
* { box-sizing: border-box; }
html, body { margin: 0; height: 1080px; overflow: hidden; }
body { width: 1920px; display: flex; flex-direction: column; font-family: "Noto Sans", sans-serif; background: #2a0818; }
h1, h2, p, pre { margin: 0; }
svg { display: block; flex: none; }
i, em { font-style: normal; }
.defs { position: absolute; width: 0; height: 0; }

/* system bar */
.topbar { height: 44px; flex: none; display: flex; align-items: center; color: #fff; font-size: 12px; white-space: nowrap; background: linear-gradient(90deg, #1f0012 0, #26041a 240px, #2b0a1e 600px, #300a24 900px, #240515 1150px, #22040f 1430px, #451528 1600px, #4a162b 1800px, #4d1526 1920px); }
.topbar > * { flex: none; }
.tb-dash { margin-left: 14px; width: 54px; }
.tb-apple { width: 19px; height: 19px; margin-right: 34px; }
.tb-chrome { width: 16px; height: 16px; margin-right: 6px; }
.tb-app { width: 638px; letter-spacing: .22px; }
.tb-clock { width: 100px; letter-spacing: .05px; }
.tb-dot { width: 8px; height: 8px; border-radius: 50%; background: #fff; margin-right: 11px; }
.tb-media { width: 60px; height: 12px; margin-right: 18px; }
.tb-spot { width: 14px; height: 14px; padding: 1px; margin-right: 1px; background: #123a20; border-radius: 3px; }
.tb-song { width: 577px; letter-spacing: .1px; }
.tb-cloud { width: 17px; height: 9px; margin-right: 29px; }
.tb-lang { width: 46px; }
.tb-wifi { width: 16px; height: 14px; margin-right: 12px; }
.tb-vol { width: 17px; height: 14px; margin-right: 21px; }
.tb-batt { width: 16px; height: 12px; margin-right: 4px; }
.tb-pill { width: 140px; height: 28px; border-radius: 14px; background: #6e4455; display: flex; align-items: center; color: #16080e; }
.tb-pill i { width: 68px; height: 28px; border-radius: 13px; background: #33d17a; }
.tb-pill em { font-size: 13px; letter-spacing: -.4px; }
.tb-power { width: 14px; height: 15px; margin-left: 4px; }

/* browser frame */
.browser { height: 943px; flex: none; display: flex; flex-direction: column; background: #1f2120; border-bottom: 1px solid #000; }
.tabstrip { height: 40px; flex: none; display: flex; align-items: center; color: #c7c7c7; font-size: 14.300px; padding-left: 6px; }
.tabsearch { width: 28px; height: 28px; border-radius: 9px; background: #3c3c3c; display: grid; place-items: center; margin-right: 3px; }
.tabsearch svg { width: 10px; height: 6px; }
.tabs { display: flex; align-self: stretch; }
.tab { width: 130.900px; flex: none; display: flex; align-items: center; padding-left: 11px; position: relative; }
.tab::after { content: ""; flex: none; width: 2px; height: 16px; background: #3f4140; margin-left: 12px; }
.fav { width: 16px; height: 16px; margin-right: 8px; }
.tab span { width: 61px; flex: none; line-height: 24px; margin: 0 11px 0 0; overflow: hidden; white-space: nowrap; -webkit-mask-image: linear-gradient(90deg, #000 38px, transparent 61px); mask-image: linear-gradient(90deg, #000 38px, transparent 61px); }
.tab:nth-child(2) span, .tab:nth-child(13) span { -webkit-mask-image: none; mask-image: none; }
.x { width: 10px; height: 10px; }
.active { background: #3c3c3c; margin: 6px 3px 0 2px; width: 124px; padding: 0 0 6px 8px; border-radius: 10px 10px 0 0; color: #e0e0e0; }
.active span { margin-right: 10px; }
.active::before { content: ""; position: absolute; inset: auto -10px 0 -10px; height: 10px; background: radial-gradient(circle at 0 0, transparent 10px, #3c3c3c 10.500px) left / 10px 10px no-repeat, radial-gradient(circle at 100% 0, transparent 10px, #3c3c3c 10.500px) right / 10px 10px no-repeat; }
.active::after { display: none; }
.active + .tab { margin-left: -1px; }
.tab:nth-child(10)::after { visibility: hidden; }
.plus { width: 10px; height: 10px; margin-left: 12px; }
.winbtns { width: 76px; height: 12px; margin-left: auto; margin-right: 12px; }
.chrome { background: #3c3c3c; height: 81px; flex: none; border-radius: 10px 10px 0 0; border-bottom: 1px solid #4a4a4a; color: #c7c7c7; }
.toolbar { height: 46px; display: flex; align-items: center; padding-left: 13px; }
.nav { width: 18px; height: 18px; margin-right: 18px; color: #c7c7c7; }
.nav.off { color: #777; }
.omnibox { width: 1518px; height: 34px; margin-left: -1px; border-radius: 17px; background: #282828; display: flex; align-items: center; padding: 0 14px 0 5px; }
.site { width: 24px; height: 24px; border-radius: 50%; background: #3c3c3c; display: grid; place-items: center; }
.site svg { width: 13px; height: 12px; }
.url { margin: -2px 0 0 8px; font-size: 13.800px; letter-spacing: -.215px; white-space: nowrap; }
.url b { font-weight: 400; color: #e8e8e8; }
.fave { width: 19px; height: 19px; margin-left: auto; }
.exts { display: flex; align-items: center; gap: 20px; margin-left: 18px; }
.exts svg { width: 16px; height: 16px; }
.vsep { width: 2px; height: 16px; background: #606060; }
.exts .vsep { margin: 0 -1px 0 -2px; }
.exts .kebab { width: 4px; margin-left: 4px; }
.me { width: 20px; height: 20px; margin: 0 1px 0 -3px; border-radius: 50%; background: #00897b; color: #fff; font-size: 12px; line-height: 19px; text-align: center; }
.exts .queue { margin: 0; }
.bookmarks { height: 28px; display: flex; align-items: center; font-size: 14.300px; padding: 0 14px 0 13px; margin-top: -1px; white-space: nowrap; }
.bstar { width: 14px; height: 14px; margin-right: 7px; }
.bm1 { width: 94px; }
.bm2 { letter-spacing: .25px; }
.gp { width: 14px; height: 16px; margin-right: 7px; }
.bookmarks .vsep { margin: 0 16px 0 auto; }
.folder { width: 17px; height: 15px; margin-right: 7px; }
.bm3 { letter-spacing: .1px; }

/* docker hub page */
.viewport { flex: 1; min-height: 0; display: flex; position: relative; background: #fff; overflow: hidden; }
.page { width: 1905px; font: 14px/20px Roboto, sans-serif; letter-spacing: .275px; color: #000; }
.wrap { width: 1152px; margin: 0 auto; }
.hubbar { height: 64px; background: linear-gradient(90deg, #1d90ee 0, #1c82ef 500px, #1d74ee 1100px, #1d63ed 1905px); color: #fff; }
.hubrow { height: 64px; display: flex; align-items: center; }
.whale { width: 32px; height: 24px; margin-top: -4px; }
.brand { font: 400 19px/24px Lato, sans-serif; letter-spacing: 1.900px; margin: -3px 0 0 4px; width: 143px; white-space: nowrap; }
.brand i { opacity: .6; margin-left: 1px; }
.hubnav { display: flex; gap: 16px; width: 475px; color: #e8f1fe; align-items: flex-start; height: 64px; letter-spacing: .25px; }
.hubnav a { padding: 7px 8px 0; border-bottom: 4px solid transparent; height: 35px; margin-top: 12px; }
.hubnav .on { color: #fff; font-weight: 600; border-color: #fff; }
.search { width: 337px; height: 37px; border: 1px solid #6aa0f5; border-radius: 4px; background: #3482f0; display: flex; align-items: center; padding: 0 8px; }
.search svg { width: 18px; height: 18px; }
.search span { margin-left: 12px; }
kbd { margin-left: auto; font: 14px/19px Roboto, sans-serif; border: 1.500px solid #fff; border-radius: 4px; padding: 0 4px; height: 22px; }
.help { width: 20px; height: 20px; margin-left: 19px; }
.grid9 { width: 16px; height: 16px; margin-left: 30px; }
.avatar { width: 40px; height: 40px; border-radius: 50%; background: #0c49c2; margin-left: 28px; text-align: center; font-size: 20px; line-height: 40px; }
a { color: inherit; }
.crumbs { height: 37px; border-bottom: 1px solid #eeeff1; display: flex; align-items: center; }
.crumbs a, .all, .builds a { color: #1d63ed; text-decoration: underline; }
.crumbs i { width: 38px; text-align: center; color: #677285; }
.muted, .updated, .missing { color: #677285; }
.quota { margin-left: auto; }
.subtabs { height: 39px; display: flex; gap: 16px; border-bottom: 1px solid #dcdee3; }
.subtabs a { padding: 10px 8px 0; border-bottom: 4px solid transparent; }
.subtabs .on { font-weight: 600; border-color: #1d63ed; letter-spacing: .22px; }
.card { border: 1px solid #e1e2e6; border-radius: 2px; background: #fff; }
.repo { height: 206px; margin-top: 24px; display: flex; }
.about { width: 692px; padding: 26px 0 0 40px; }
.title { display: flex; align-items: center; gap: 11px; height: 28px; }
h1 { font: 400 24px/28px Roboto, sans-serif; letter-spacing: .470px; white-space: nowrap; }
.title svg { width: 20px; height: 20px; }
.updated { margin-top: 6px; }
.missing { display: flex; align-items: center; margin-top: 16px; height: 20px; }
.missing.second { margin-top: 35px; }
.pen { width: 20px; height: 20px; margin-left: 8.500px; }
.inf { width: 17px; height: 17px; margin: 0 5px 0 9px; }
.second .pen { margin-left: 11px; }
.second .inf { margin-left: 18px; position: relative; top: 1px; }
.second b { position: relative; top: 1px; }
.missing b { font-size: 10px; font-weight: 500; color: #8f3a04; letter-spacing: .260px; }
.commands { width: 449px; padding-top: 24px; }
.cmdhead { display: flex; justify-content: space-between; height: 66px; }
h2 { font: 500 18px/24px Roboto, sans-serif; letter-spacing: 0; }
.cmdhead p { margin-top: 6px; }
button { letter-spacing: .250px; }
.outline { width: 112px; height: 40px; border: 2px solid #1d63ed; border-radius: 4px; background: #fff; color: #1d63ed; font: 500 14px Roboto, sans-serif; padding: 0; }
pre { height: 58px; border: 1px solid #c4c8d1; border-radius: 4px; background: #e1e2e6; padding: 8px 0 8px 8px; font: 14px/20px "Roboto Mono", "DejaVu Sans Mono", monospace; letter-spacing: .280px; color: #393f49; white-space: pre-wrap; word-break: break-all; }
.columns { display: flex; gap: 16px; margin-top: 16px; height: 408px; }
.tags { width: 665px; padding: 24px 24px; }
.builds { flex: 1; margin-right: 1px; padding: 24px 20px 24px 24px; }
.tags p, .builds h2 + p { margin-top: 24px; }
table { border-collapse: collapse; width: 615px; table-layout: fixed; margin-top: 8px; }
th { font-weight: 600; text-align: left; }
th, td { height: 41px; padding: 0 8px; border-bottom: 1px solid #eff0f2; }
thead th { height: 40px; }
.c1 { width: 142px; }
.c2 { width: 60px; }
td.c2, th.c2 { padding-left: 20px; }
.c3 { width: 118px; }
th.c3 { padding-left: 23px; }
td:nth-child(3) { padding-left: 18px; }
.c4 { width: 128px; text-align: right; padding: 0 8px 0 0; }
.c5 { text-align: right; }
.ok { display: inline-block; width: 10px; height: 10px; border-radius: 3px; background: #3ba08d; margin-right: 7.700px; }
td a { color: #1d63ed; }
.tux { width: 16px; height: 20px; margin-left: 1px; }
.all { display: inline-block; margin-top: 16px; }
.builds p + p { margin-top: 16px; }
.ext { display: inline-block; width: 13px; height: 13px; margin: 0 1px 0 0; vertical-align: -3.500px; }
.primary { width: 86px; height: 41px; margin-top: 16px; padding: 0 0 2px; border: 0; border-radius: 4px; background: #1d63ed; color: #fff; font: 500 14px Roboto, sans-serif; }
.next { height: 60px; margin-top: 16px; }
.drop { position: absolute; left: 1866px; top: 394px; width: 39px; height: 34px; border-radius: 17px 0 0 17px; background: #fff; box-shadow: 0 2px 9px rgba(0, 0, 0, .25); padding: 4px 0 0 5px; clip-path: inset(-20px 0 -20px -20px); }
.drop svg { width: 24px; height: 26px; }
.scrollbar { width: 15px; background: #f1f1f1; display: flex; flex-direction: column; align-items: center; }
.scrollbar svg { width: 7px; height: 4px; margin-top: 6px; }
.scrollbar i { width: 11px; height: 414px; background: #c1c1c1; margin-top: 4px; }
.scrollbar svg:last-child { margin: auto 0 6px; }

/* desktop and dock */
.desk { flex: 1; display: flex; justify-content: center; padding-top: 7px; position: relative; background: linear-gradient(90deg, #421631 0, #4b1838 34px, #5c1f47 46px, #702456 250px, #7c2759 420px, #822858 800px, #8a2b56 1150px, #a0364f 1300px, #b74048 1480px, #c6473f 1650px, #c4462f 1800px, #9c2f1e 1890px, #8f2a18 1920px); }
.desk::before { content: ""; position: absolute; inset: 0; background: #9b3169; clip-path: polygon(378px 0, 665px 0, 780px 100%, 430px 100%); }
.dock { width: 1421px; height: 78px; margin-right: 2px; padding: 0 8px; position: relative; display: flex; align-items: center; border: 1px solid #1d0d14; border-radius: 24px; background: linear-gradient(90deg, #432436, #4b2839 40%, #42242f 60%, #4e2a2e 80%, #572d2a); }
.app { width: 58px; flex: none; height: 46px; display: flex; justify-content: center; position: relative; }
.app > svg { width: 46px; height: 46px; }
.run { position: absolute; left: 0; right: 0; top: 45px; display: flex; justify-content: center; gap: 2.500px; }
.run i { width: 5px; height: 5px; border-radius: 50%; background: #d8cdd1; }
.blue i { background: #3584e4; }
.dsep { width: 1px; height: 46px; margin: -12px 5px 0; background: #84666c; }
```
